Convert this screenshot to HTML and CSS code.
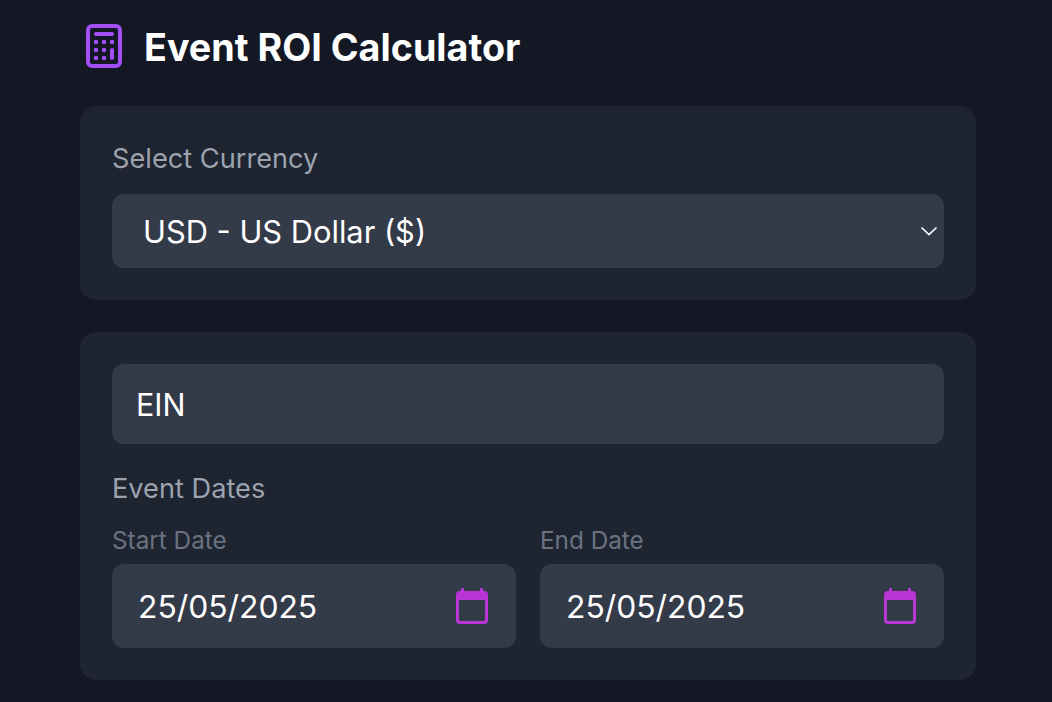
FILE: index.html
```html
<!DOCTYPE html>
<html lang="en">
<head>
    <meta charset="UTF-8">
    <meta name="viewport" content="width=device-width, initial-scale=1.0">
    <title>Event ROI Calculator</title>
    <link rel="stylesheet" href="styles.css">
</head>
<body>
    <main class="page">
        <header class="page-header">
            <svg class="logo" viewBox="0 0 36 44" fill="none" stroke="currentColor" stroke-width="4" stroke-linecap="round" stroke-linejoin="round">
                <rect x="2" y="2" width="32" height="40" rx="4"/>
                <path d="M10 10h16M26 26v8"/>
                <path stroke-width="4.6" d="M10 18h.01M18 18h.01M26 18h.01M10 26h.01M18 26h.01M10 34h.01M18 34h.01"/>
            </svg>
            <h1>Event ROI Calculator</h1>
        </header>

        <!-- currency -->
        <section class="card">
            <label class="label" for="currency">Select Currency</label>
            <div class="select-wrap">
                <select id="currency" class="select">
                    <option>USD - US Dollar ($)</option>
                </select>
                <svg class="chevron" viewBox="0 0 18 10" fill="none" stroke="currentColor" stroke-width="1.7">
                    <path d="M1.5 1.5L9 8.5l7.5-7"/>
                </svg>
            </div>
        </section>

        <!-- event details -->
        <section class="card">
            <input class="field" type="text" value="EIN">
            <div class="label dates-label">Event Dates</div>
            <div class="dates">
                <div>
                    <label class="sublabel">Start Date</label>
                    <div class="date-field">
                        <span class="date-value">25/05/2025</span>
                        <svg class="calendar" viewBox="0 0 32 36">
                            <path d="M5 0h3v3h16V0h3v3h1a4 4 0 014 4v25a4 4 0 01-4 4H4a4 4 0 01-4-4V7a4 4 0 014-4h1zM3 12v20a1 1 0 001 1h24a1 1 0 001-1V12z" fill="currentColor" fill-rule="evenodd"/>
                        </svg>
                    </div>
                </div>
                <div>
                    <label class="sublabel">End Date</label>
                    <div class="date-field">
                        <span class="date-value">25/05/2025</span>
                        <svg class="calendar" viewBox="0 0 32 36">
                            <path d="M5 0h3v3h16V0h3v3h1a4 4 0 014 4v25a4 4 0 01-4 4H4a4 4 0 01-4-4V7a4 4 0 014-4h1zM3 12v20a1 1 0 001 1h24a1 1 0 001-1V12z" fill="currentColor" fill-rule="evenodd"/>
                        </svg>
                    </div>
                </div>
            </div>
        </section>
    </main>
</body>
</html>
```

FILE: styles.css
```css
body {
    margin: 0;
    background: #131824;
    color: #ffffff;
    font-family: Inter, "Noto Sans", sans-serif;
    overflow: hidden;
}

.page {
    width: 896px;
    margin-left: 80px;
}

.page-header {
    display: flex;
    align-items: center;
    height: 94px;
    margin-bottom: 12px;
}

.logo {
    width: 36px;
    height: 44px;
    margin-top: -2px;
    margin-left: 6px;
    margin-right: 22px;
    color: #a24ff5;
}

h1 {
    margin: 0;
    font-size: 37.7px;
    line-height: 40px;
    font-weight: 700;
}

.card {
    background: #1e2430;
    border-radius: 16px;
    padding: 32px;
    margin-bottom: 32px;
}

.label {
    display: block;
    color: #9ca3af;
    font-size: 27.2px;
    line-height: 32px;
    margin-top: -28px;
    padding-top: 33px;
    margin-bottom: 19px;
}

.select-wrap {
    position: relative;
}

.select {
    display: block;
    width: 100%;
    height: 74px;
    padding: 0 31px;
    border: none;
    border-radius: 12px;
    background: #333a48;
    color: #ffffff;
    font-family: inherit;
    font-size: 30.8px;
    appearance: none;
}

.chevron {
    position: absolute;
    top: 32px;
    right: 6px;
    width: 18px;
    height: 10px;
    color: #ffffff;
}

.field {
    display: block;
    box-sizing: border-box;
    width: 100%;
    height: 80px;
    padding: 0 24px;
    border: none;
    border-radius: 12px;
    background: #333a48;
    color: #ffffff;
    font-family: inherit;
    font-size: 30.5px;
}

.dates-label {
    margin-top: 0;
    padding-top: 29px;
    margin-bottom: 21px;
}

.dates {
    display: grid;
    grid-template-columns: 1fr 1fr;
    gap: 24px;
}

.sublabel {
    display: block;
    color: #6b7280;
    font-size: 24.3px;
    line-height: 28px;
    margin-bottom: 10px;
}

.date-field {
    display: flex;
    align-items: center;
    justify-content: space-between;
    height: 84px;
    padding: 0 28px 0 26px;
    border-radius: 12px;
    background: #333a48;
    font-size: 31.8px;
}

.date-value {
    padding-top: 1px;
}

.calendar {
    width: 32px;
    height: 36px;
    color: #b935d6;
}
```
